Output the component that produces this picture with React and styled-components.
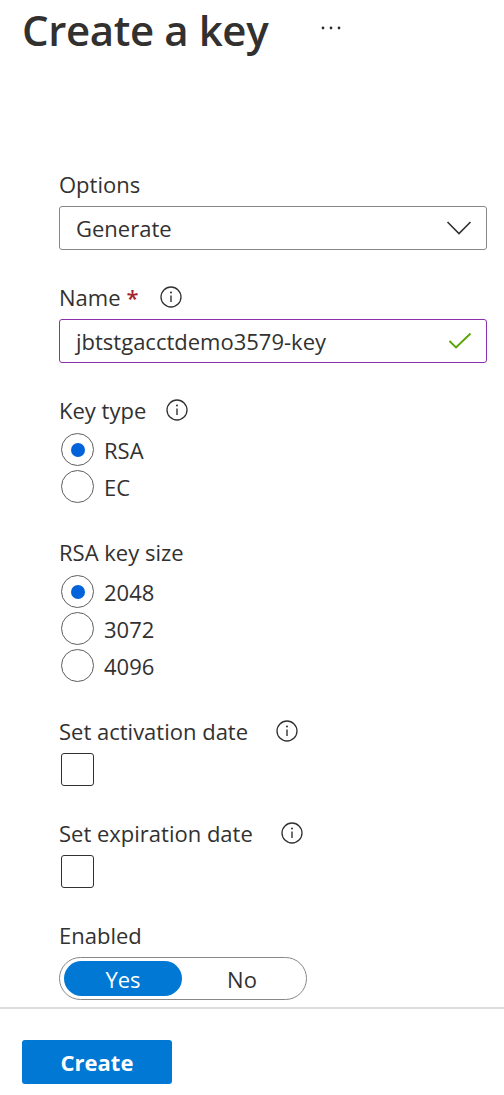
import styled, { createGlobalStyle } from 'styled-components';

const GlobalStyle = createGlobalStyle`
  html, body {
    margin: 0;
    padding: 0;
    background: #ffffff;
  }
  body {
    font-family: "Open Sans", "Noto Sans", "Liberation Sans", sans-serif;
    color: #323130;
  }
`;

const Page = styled.div`
  width: 504px;
  height: 1095px;
  display: flex;
  flex-direction: column;
  overflow: hidden;
`;

const Header = styled.div`
  display: flex;
  align-items: center;
  gap: 52px;
  padding: 0 0 0 22px;
  height: 60px;
`;

const Title = styled.h1`
  margin: 0;
  font-size: 42px;
  font-weight: 600;
  letter-spacing: -0.4px;
  line-height: 60px;
  color: #323130;
`;

const MoreButton = styled.button`
  background: none;
  border: none;
  padding: 0;
  display: flex;
  align-items: center;
  cursor: pointer;
  margin-top: -4px;
`;

const Form = styled.div`
  flex: 1;
  display: flex;
  flex-direction: column;
  gap: 33px;
  padding: 110px 17px 0 59px;
`;

const Field = styled.div`
  display: flex;
  flex-direction: column;
  gap: ${(p) => p.$gap ?? 8}px;
`;

const Label = styled.div`
  display: flex;
  align-items: center;
  font-size: 22px;
  line-height: 28px;
  height: 28px;
  color: #323130;
`;

const Required = styled.span`
  color: #a4262c;
  font-weight: 600;
  margin-left: 6px;
`;

const InfoWrap = styled.span`
  display: inline-flex;
  margin-left: ${(p) => p.$gap || 21}px;
`;

const Box = styled.div`
  height: 44px;
  box-sizing: border-box;
  border: 1px solid ${(p) => (p.$focus ? '#8c31ab' : '#8a8886')};
  border-radius: 3px;
  display: flex;
  align-items: center;
  justify-content: space-between;
  padding: 0 14px 0 16px;
  font-size: 22px;
  color: #323130;
`;

const RadioList = styled.div`
  display: flex;
  flex-direction: column;
`;

const RadioRow = styled.label`
  display: flex;
  align-items: center;
  gap: 10px;
  height: 37px;
  margin-left: 2px;
  font-size: 22px;
  color: #323130;
`;

const RadioCircle = styled.span`
  width: 33px;
  height: 33px;
  box-sizing: border-box;
  border-radius: 50%;
  border: 1px solid #605e5c;
  display: flex;
  align-items: center;
  justify-content: center;
  &::after {
    content: '';
    width: 14px;
    height: 14px;
    border-radius: 50%;
    background: ${(p) => (p.$checked ? '#0063d9' : 'transparent')};
  }
`;

const Checkbox = styled.span`
  display: block;
  width: 33px;
  height: 33px;
  margin-left: 2px;
  box-sizing: border-box;
  border: 1px solid #323130;
  border-radius: 3px;
`;

const Toggle = styled.div`
  width: 248px;
  height: 43px;
  box-sizing: border-box;
  border: 1px solid #8a8886;
  border-radius: 22px;
  padding: 3px 4px;
  display: flex;
`;

const ToggleOption = styled.span`
  flex: ${(p) => (p.$active ? '0 0 118px' : '1')};
  border-radius: 18px;
  background: ${(p) => (p.$active ? '#0078d4' : 'transparent')};
  color: ${(p) => (p.$active ? '#ffffff' : '#323130')};
  display: flex;
  align-items: center;
  justify-content: center;
  font-size: 22px;
`;

const Footer = styled.div`
  border-top: 2px solid #dddcdb;
  height: 88px;
  box-sizing: border-box;
  padding: 31px 0 0 22px;
`;

const PrimaryButton = styled.button`
  width: 150px;
  height: 44px;
  border: none;
  border-radius: 3px;
  background: #0078d4;
  color: #ffffff;
  font-family: inherit;
  font-size: 22px;
  font-weight: 700;
  cursor: pointer;
`;

const InfoIcon = () => (
  <svg width="22" height="22" viewBox="0 0 22 22">
    <circle cx="11" cy="11" r="10" fill="none" stroke="#323130" strokeWidth="1.3" />
    <circle cx="11" cy="6.6" r="1" fill="#323130" />
    <line x1="11" y1="9.5" x2="11" y2="16" stroke="#323130" strokeWidth="1.4" />
  </svg>
);

const Chevron = () => (
  <svg width="26" height="16" viewBox="0 0 26 16">
    <polyline points="1.5,2 13,13.5 24.5,2" fill="none" stroke="#323130" strokeWidth="1.6" />
  </svg>
);

const Check = () => (
  <svg width="24" height="18" viewBox="0 0 24 18">
    <polyline points="1.5,9 8,15.5 22.5,1.5" fill="none" stroke="#57a300" strokeWidth="1.8" />
  </svg>
);

const Dots = () => (
  <svg width="22" height="6" viewBox="0 0 22 6">
    <circle cx="3" cy="3" r="1.4" fill="#323130" />
    <circle cx="11" cy="3" r="1.4" fill="#323130" />
    <circle cx="19" cy="3" r="1.4" fill="#323130" />
  </svg>
);

const Radio = ({ label, checked }) => (
  <RadioRow>
    <RadioCircle $checked={checked} />
    {label}
  </RadioRow>
);

export default function App() {
  return (
    <Page>
      <GlobalStyle />
      <Header>
        <Title>Create a key</Title>
        <MoreButton aria-label="More">
          <Dots />
        </MoreButton>
      </Header>
      <Form>
        <Field>
          <Label>Options</Label>
          <Box>
            Generate
            <Chevron />
          </Box>
        </Field>
        <Field>
          <Label>
            Name<Required>*</Required>
            <InfoWrap $gap={21}><InfoIcon /></InfoWrap>
          </Label>
          <Box $focus>
            jbtstgacctdemo3579-key
            <Check />
          </Box>
        </Field>
        <Field $gap={7}>
          <Label>
            Key type
            <InfoWrap $gap={20}><InfoIcon /></InfoWrap>
          </Label>
          <RadioList>
            <Radio label="RSA" checked />
            <Radio label="EC" />
          </RadioList>
        </Field>
        <Field $gap={7}>
          <Label>RSA key size</Label>
          <RadioList>
            <Radio label="2048" checked />
            <Radio label="3072" />
            <Radio label="4096" />
          </RadioList>
        </Field>
        <Field>
          <Label>
            Set activation date
            <InfoWrap $gap={28}><InfoIcon /></InfoWrap>
          </Label>
          <Checkbox />
        </Field>
        <Field>
          <Label>
            Set expiration date
            <InfoWrap $gap={28}><InfoIcon /></InfoWrap>
          </Label>
          <Checkbox />
        </Field>
        <Field>
          <Label>Enabled</Label>
          <Toggle>
            <ToggleOption $active>Yes</ToggleOption>
            <ToggleOption>No</ToggleOption>
          </Toggle>
        </Field>
      </Form>
      <Footer>
        <PrimaryButton>Create</PrimaryButton>
      </Footer>
    </Page>
  );
}
